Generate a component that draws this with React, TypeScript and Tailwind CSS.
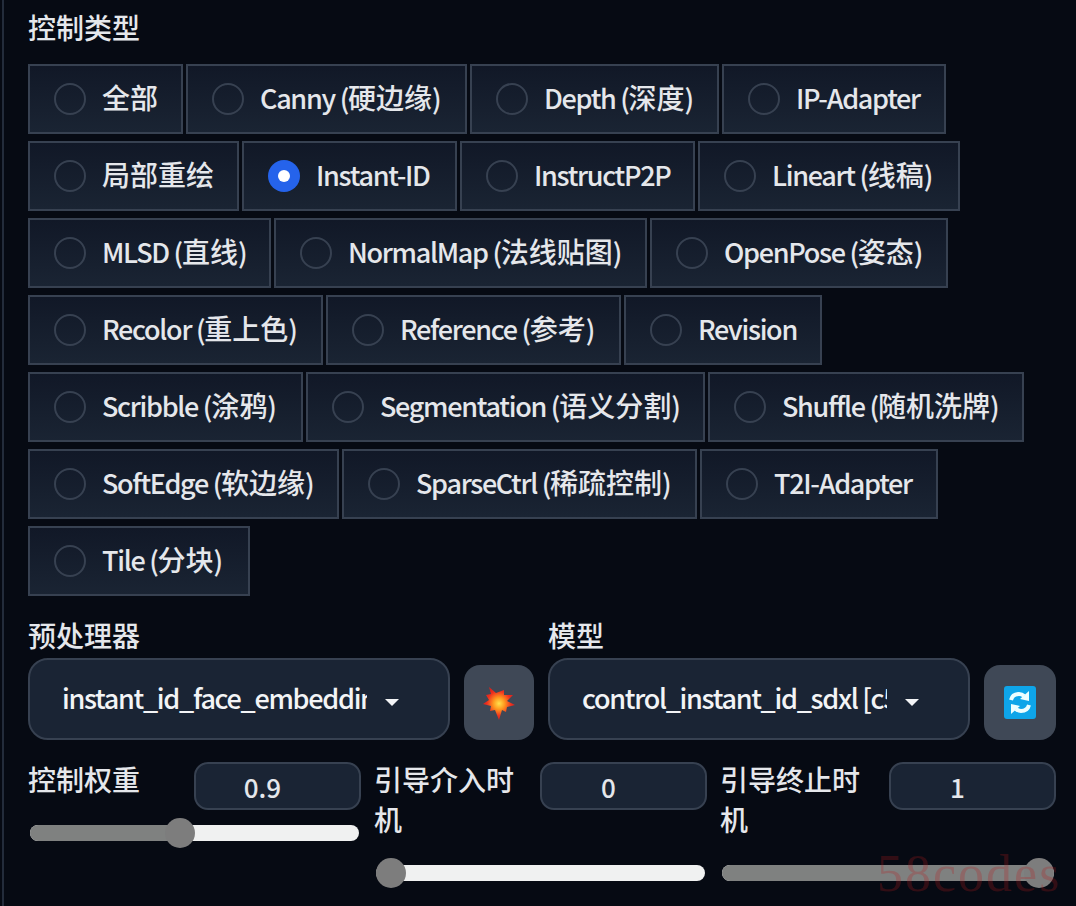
const font = { fontFamily: '"Noto Sans CJK SC", "Noto Sans", sans-serif' };

const controlTypes = [
  { label: '全部', width: 'w-[155px]' },
  { label: 'Canny (硬边缘)', width: 'w-[281px]' },
  { label: 'Depth (深度)', width: 'w-[249px]' },
  { label: 'IP-Adapter', width: 'w-[224px]' },
  { label: '局部重绘', width: 'w-[211px]' },
  { label: 'Instant-ID', width: 'w-[215px]', checked: true },
  { label: 'InstructP2P', width: 'w-[235px]' },
  { label: 'Lineart (线稿)', width: 'w-[262px]' },
  { label: 'MLSD (直线)', width: 'w-[243px]' },
  { label: 'NormalMap (法线贴图)', width: 'w-[373px]' },
  { label: 'OpenPose (姿态)', width: 'w-[298px]' },
  { label: 'Recolor (重上色)', width: 'w-[295px]' },
  { label: 'Reference (参考)', width: 'w-[295px]' },
  { label: 'Revision', width: 'w-[198px]' },
  { label: 'Scribble (涂鸦)', width: 'w-[275px]' },
  { label: 'Segmentation (语义分割)', width: 'w-[399px]' },
  { label: 'Shuffle (随机洗牌)', width: 'w-[316px]' },
  { label: 'SoftEdge (软边缘)', width: 'w-[311px]' },
  { label: 'SparseCtrl (稀疏控制)', width: 'w-[355px]' },
  { label: 'T2I-Adapter', width: 'w-[238px]' },
  { label: 'Tile (分块)', width: 'w-[222px]' },
];

// latin runs are narrower than the cjk font's own latin glyphs
function MixedText({ text }: { text: string }) {
  return (
    <>
      {text.split(/([\u4e00-\u9fff]+)/).map((part, i) =>
        i % 2 === 1 ? (
          <span key={i}>{part}</span>
        ) : (
          <span key={i} className="text-[27px] tracking-[-1.3px]">
            {part}
          </span>
        ),
      )}
    </>
  );
}

function RadioButton({ label, width, checked }: { label: string; width: string; checked?: boolean }) {
  return (
    <label className={`${width} h-[70px] flex items-center gap-[16px] pl-[24px] border-2 border-[#374151] bg-gradient-to-b from-[#111827] to-[#1a2433] text-[#e5e7eb] font-medium whitespace-nowrap`}>
      {checked ? (
        <span className="w-[32px] h-[32px] shrink-0 rounded-full bg-[#2563eb] flex items-center justify-center">
          <span className="w-[12px] h-[12px] rounded-full bg-white" />
        </span>
      ) : (
        <span className="w-[32px] h-[32px] shrink-0 rounded-full border-2 border-[#374151] bg-transparent" />
      )}
      <span className="pb-[3px]">
        <MixedText text={label} />
      </span>
    </label>
  );
}

function Dropdown({ value }: { value: string }) {
  return (
    <div className="w-[422px] h-[82px] rounded-[20px] border-2 border-[#374151] bg-[#1a2434] flex items-center pl-[32px] text-[#f3f4f6] font-medium">
      <span className="w-[305px] pb-[2px] overflow-hidden whitespace-nowrap text-[27px] tracking-[-1.3px]">{value}</span>
      <span className="ml-[18px] mt-[6px] w-0 h-0 border-x-[7px] border-x-transparent border-t-[7px] border-t-[#f3f4f6]" />
    </div>
  );
}

function IconButton({ width, children }: { width: string; children: React.ReactNode }) {
  return (
    <button className={`${width} mt-[7px] h-[75px] rounded-[16px] bg-[#3f4856] flex items-center justify-center shrink-0`}>
      {children}
    </button>
  );
}

function ValueBox({ value }: { value: string }) {
  return (
    <div className="w-[167px] h-[48px] shrink-0 rounded-[14px] border-2 border-[#374151] bg-[#1a2434] flex items-center justify-center pr-[30px] text-[26px] font-medium text-[#e5e7eb]">
      {value}
    </div>
  );
}

function Slider({ percent }: { percent: number }) {
  return (
    <div className="relative h-[16px] mx-[2px] rounded-full bg-[#f0f1f1]">
      <div className="h-full rounded-l-full bg-[#7f8180]" style={{ width: `${percent}%` }} />
      <div
        className="absolute top-1/2 w-[30px] h-[30px] -translate-x-1/2 -translate-y-1/2 rounded-full bg-[#7d7d7d]"
        style={{ left: `${percent}%` }}
      />
    </div>
  );
}

function SliderField({ label, value, percent, width, mt }: { label: string; value: string; percent: number; width: string; mt: string }) {
  return (
    <div className={width}>
      <div className="flex justify-between items-start">
        <span className="w-[150px] -mt-[3px] leading-[40px] text-[#e5e7eb] font-medium">{label}</span>
        <ValueBox value={value} />
      </div>
      <div className={mt}>
        <Slider percent={percent} />
      </div>
    </div>
  );
}

export default function App() {
  return (
    <div className="relative w-[1076px] h-[906px] overflow-hidden bg-[#060a13] pl-[2px] text-[28px]" style={font}>
      <div className="h-full border-l-2 border-[#232c3b] pl-[24px] pr-[20px] pt-[7px]">
        <div className="h-[41px] leading-[40px] text-[#e5e7eb] font-medium">控制类型</div>
        <div className="mt-[16px] flex flex-wrap gap-x-[3px] gap-y-[7px]">
          {controlTypes.map((item) => (
            <RadioButton key={item.label} {...item} />
          ))}
        </div>

        <div className="mt-[20px] flex gap-[14px]">
          <div className="w-[506px]">
            <div className="h-[42px] leading-[38px] text-[#e5e7eb] font-medium">预处理器</div>
            <div className="flex gap-[14px]">
              <Dropdown value="instant_id_face_embedding" />
              <IconButton width="w-[70px]">
                <svg width="34" height="36" viewBox="0 0 34 36">
                  <defs>
                    <radialGradient id="blast">
                      <stop offset="0" stopColor="#ffe14d" />
                      <stop offset="0.35" stopColor="#ff9a1f" />
                      <stop offset="0.75" stopColor="#ef2f1f" />
                      <stop offset="1" stopColor="#d8231c" />
                    </radialGradient>
                  </defs>
                  <polygon
                    fill="url(#blast)"
                    points="7,2 14,8 22,5 22,10 31,10 25,16 33,20 25,22 24,27 20,25 17,35 13,25 8,26 9,21 1,19 7,15 4,10 9,9"
                  />
                </svg>
              </IconButton>
            </div>
          </div>
          <div className="w-[508px]">
            <div className="h-[42px] leading-[38px] text-[#e5e7eb] font-medium">模型</div>
            <div className="flex gap-[14px]">
              <Dropdown value="control_instant_id_sdxl [c5c25a35]" />
              <IconButton width="w-[72px]">
                <svg width="32" height="33" viewBox="0 0 32 33">
                  <rect width="32" height="33" rx="3" fill="#0ea5e9" />
                  <path d="M7 14c1-4 4-6 8-6 2 0 4 1 5 2" fill="none" stroke="#ecfeff" strokeWidth="4" />
                  <polygon points="25,5 25,15 16,13" fill="#ecfeff" />
                  <path d="M25 19c-1 4-4 6-8 6-2 0-4-1-5-2" fill="none" stroke="#ecfeff" strokeWidth="4" />
                  <polygon points="7,28 7,18 16,20" fill="#ecfeff" />
                </svg>
              </IconButton>
            </div>
          </div>
        </div>

        <div className="mt-[22px] flex gap-[13px]">
          <SliderField label="控制权重" value="0.9" percent={45.5} width="w-[333px]" mt="mt-[15px]" />
          <SliderField label="引导介入时机" value="0" percent={4.5} width="w-[333px]" mt="mt-[26px]" />
          <SliderField label="引导终止时机" value="1" percent={95.5} width="w-[336px]" mt="mt-[26px]" />
        </div>
      </div>
      <div
        className="absolute left-[877px] top-[844px] text-[52px] leading-[60px] tracking-[2px] text-[#b91c1c]/25 pointer-events-none"
        style={{ fontFamily: '"Liberation Serif", serif' }}
      >
        58codes
      </div>
    </div>
  );
}
